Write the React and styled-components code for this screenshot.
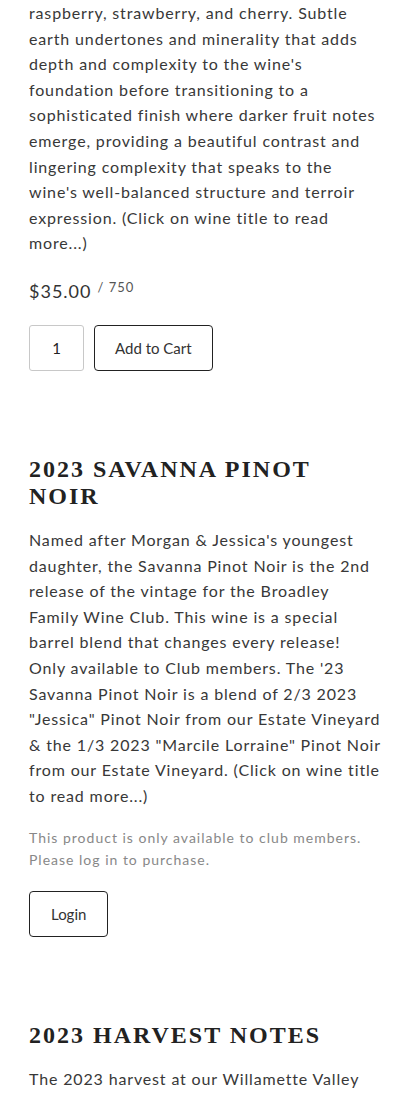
import React from "react";
import styled, { createGlobalStyle } from "styled-components";

const GlobalStyle = createGlobalStyle`
  html, body {
    margin: 0;
    padding: 0;
    background: #fff;
  }
  body {
    font-family: Lato, "Liberation Sans", Arial, sans-serif;
    color: #333;
    -webkit-font-smoothing: antialiased;
  }
`;

const Page = styled.main`
  padding: 0 8px 40px 29px;
  overflow: hidden;
`;

const Product = styled.section`
  margin-bottom: ${(p) => p.$gap || "0"};
`;

const Title = styled.h2`
  max-width: 353px;
  margin: 0 0 17px;
  font-family: "Liberation Serif", "DejaVu Serif", serif;
  font-weight: 700;
  font-size: 24px;
  line-height: 27px;
  letter-spacing: 2px;
  text-transform: uppercase;
  color: #222;
`;

const Teaser = styled.p`
  margin: 0;
  font-size: 16px;
  line-height: 25.6px;
  letter-spacing: 0.85px;
  color: #383838;
  white-space: nowrap;
`;

const Price = styled.div`
  margin-top: 23px;
  display: flex;
  align-items: flex-start;
  gap: 6px;
  font-size: 18px;
  line-height: 24px;
  letter-spacing: 1px;
  color: #333;

  small {
    font-size: 13px;
    line-height: 16px;
    letter-spacing: 1px;
    color: #555;
  }
`;

const BuyRow = styled.div`
  margin-top: 22px;
  display: flex;
  gap: 10px;
`;

const Qty = styled.input`
  box-sizing: border-box;
  width: 55px;
  height: 46px;
  border: 1px solid #c8c8c8;
  border-radius: 3px;
  text-align: center;
  font-family: Lato, "Liberation Sans", Arial, sans-serif;
  font-size: 15px;
  color: #222;
  padding: 0;
`;

const Button = styled.button`
  box-sizing: border-box;
  height: 46px;
  padding: 0 ${(p) => p.$pad || "20px"};
  border: 1px solid #222;
  border-radius: 4px;
  background: #fff;
  font-family: Lato, "Liberation Sans", Arial, sans-serif;
  font-size: 15px;
  color: #333;
  cursor: pointer;
`;

const Notice = styled.p`
  margin: 19px 0 20px;
  font-size: 14px;
  line-height: 22px;
  letter-spacing: 1px;
  color: #888;
`;

const lines = (arr) =>
  arr.map((l, i) => (
    <React.Fragment key={i}>
      {l}
      {i < arr.length - 1 && <br />}
    </React.Fragment>
  ));

const firstTeaser = [
  "raspberry, strawberry, and cherry. Subtle",
  "earth undertones and minerality that adds",
  "depth and complexity to the wine's",
  "foundation before transitioning to a",
  "sophisticated finish where darker fruit notes",
  "emerge, providing a beautiful contrast and",
  "lingering complexity that speaks to the",
  "wine's well-balanced structure and terroir",
  "expression. (Click on wine title to read",
  "more...)",
];

const savannaTeaser = [
  "Named after Morgan & Jessica's youngest",
  "daughter, the Savanna Pinot Noir is the 2nd",
  "release of the vintage for the Broadley",
  "Family Wine Club. This wine is a special",
  "barrel blend that changes every release!",
  "Only available to Club members. The '23",
  "Savanna Pinot Noir is a blend of 2/3 2023",
  "\"Jessica\" Pinot Noir from our Estate Vineyard",
  "& the 1/3 2023 \"Marcile Lorraine\" Pinot Noir",
  "from our Estate Vineyard. (Click on wine title",
  "to read more...)",
];

const harvestTeaser = ["The 2023 harvest at our Willamette Valley"];

export default function App() {
  return (
    <>
      <GlobalStyle />
      <Page>
        <Product $gap="85px">
          <Teaser>{lines(firstTeaser)}</Teaser>
          <Price>
            $35.00 <small>/ 750</small>
          </Price>
          <BuyRow>
            <Qty type="text" defaultValue="1" />
            <Button>Add to Cart</Button>
          </BuyRow>
        </Product>

        <Product $gap="85px">
          <Title>2023 Savanna Pinot Noir</Title>
          <Teaser>{lines(savannaTeaser)}</Teaser>
          <Notice>
            This product is only available to club members.
            <br />
            Please log in to purchase.
          </Notice>
          <Button $pad="21px">Login</Button>
        </Product>

        <Product>
          <Title>2023 Harvest Notes</Title>
          <Teaser>{lines(harvestTeaser)}</Teaser>
        </Product>
      </Page>
    </>
  );
}
